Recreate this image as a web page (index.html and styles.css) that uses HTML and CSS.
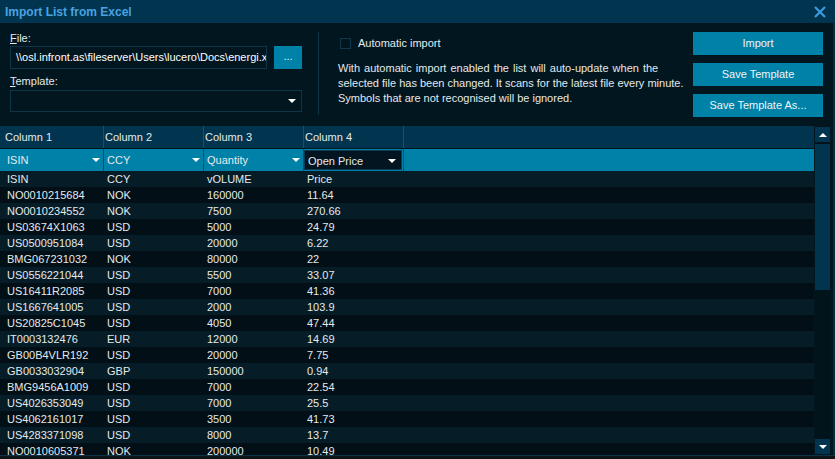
FILE: index.html
```html
<!DOCTYPE html>
<html>
<head>
<meta charset="utf-8">
<title>Import List from Excel</title>
<link rel="stylesheet" href="styles.css">
</head>
<body>
<div class="dialog">
  <div class="titlebar">
    <span class="title">Import List from Excel</span>
    <svg class="close" width="12" height="12" viewBox="0 0 12 12"><path d="M1 1L11 11M11 1L1 11" stroke="#3d9ade" stroke-width="2.2"/></svg>
  </div>
  <div class="content">
    <div class="top">
      <div class="file-panel">
        <div class="label"><u>F</u>ile:</div>
        <div class="file-row">
          <div class="input">\\osl.infront.as\fileserver\Users\lucero\Docs\energi.xlsx</div>
          <div class="browse">...</div>
        </div>
        <div class="label label-template"><u>T</u>emplate:</div>
        <div class="select"><span class="arrow"></span></div>
      </div>
      <div class="sep"></div>
      <div class="info">
        <div class="check-row"><span class="checkbox"></span><span>Automatic import</span></div>
        <p class="desc"><span class="l1">With automatic import enabled the list will auto-update when the</span><br>selected file has been changed. It scans for the latest file every minute.<br>Symbols that are not recognised will be ignored.</p>
      </div>
      <div class="buttons">
        <div class="btn">Import</div>
        <div class="btn">Save Template</div>
        <div class="btn">Save Template As...</div>
      </div>
    </div>
    <div class="grid">
      <div class="table">
        <div class="row head">
          <div class="cell">Column 1</div>
          <div class="cell">Column 2</div>
          <div class="cell">Column 3</div>
          <div class="cell">Column 4</div>
          <div class="cell last"></div>
        </div>
        <div class="row selrow">
          <div class="cell"><span>ISIN</span><span class="arrow"></span></div>
          <div class="cell"><span>CCY</span><span class="arrow"></span></div>
          <div class="cell"><span>Quantity</span><span class="arrow"></span></div>
          <div class="cell focus"><div class="combo"><span>Open Price</span><span class="arrow"></span></div></div>
          <div class="cell last"></div>
        </div>
        <div class="rows">
          <div class="row data"><div>ISIN</div><div>CCY</div><div>vOLUME</div><div>Price</div></div>
          <div class="row data"><div>NO0010215684</div><div>NOK</div><div>160000</div><div>11.64</div></div>
          <div class="row data"><div>NO0010234552</div><div>NOK</div><div>7500</div><div>270.66</div></div>
          <div class="row data"><div>US03674X1063</div><div>USD</div><div>5000</div><div>24.79</div></div>
          <div class="row data"><div>US0500951084</div><div>USD</div><div>20000</div><div>6.22</div></div>
          <div class="row data"><div>BMG067231032</div><div>NOK</div><div>80000</div><div>22</div></div>
          <div class="row data"><div>US0556221044</div><div>USD</div><div>5500</div><div>33.07</div></div>
          <div class="row data"><div>US16411R2085</div><div>USD</div><div>7000</div><div>41.36</div></div>
          <div class="row data"><div>US1667641005</div><div>USD</div><div>2000</div><div>103.9</div></div>
          <div class="row data"><div>US20825C1045</div><div>USD</div><div>4050</div><div>47.44</div></div>
          <div class="row data"><div>IT0003132476</div><div>EUR</div><div>12000</div><div>14.69</div></div>
          <div class="row data"><div>GB00B4VLR192</div><div>USD</div><div>20000</div><div>7.75</div></div>
          <div class="row data"><div>GB0033032904</div><div>GBP</div><div>150000</div><div>0.94</div></div>
          <div class="row data"><div>BMG9456A1009</div><div>USD</div><div>7000</div><div>22.54</div></div>
          <div class="row data"><div>US4026353049</div><div>USD</div><div>7000</div><div>25.5</div></div>
          <div class="row data"><div>US4062161017</div><div>USD</div><div>3500</div><div>41.73</div></div>
          <div class="row data"><div>US4283371098</div><div>USD</div><div>8000</div><div>13.7</div></div>
          <div class="row data"><div>NO0010605371</div><div>NOK</div><div>200000</div><div>10.49</div></div>
        </div>
      </div>
      <div class="scrollbar">
        <div class="sb-btn"><span class="up"></span></div>
        <div class="thumb"></div>
        <div class="track"></div>
        <div class="sb-btn"><span class="down"></span></div>
      </div>
      <div class="edge"></div>
    </div>
  </div>
  <div class="under"></div>
</div>
</body>
</html>
```
FILE: styles.css
```css
* { box-sizing: border-box; margin: 0; padding: 0; }
html, body { width: 835px; height: 459px; overflow: hidden; background: #02161f; }
body { font-family: "Liberation Sans", Arial, sans-serif; font-size: 11px; color: #e4eaed; }

.dialog { width: 835px; height: 459px; display: flex; flex-direction: column; background: #02161f; }

.titlebar { height: 23px; flex: none; background: #00344f; display: flex; align-items: center; justify-content: space-between; padding: 0 9px 0 5px; }
.title { font-size: 12px; font-weight: bold; color: #4aa3e0; }
.close { display: block; }

.content { flex: none; height: 432px; display: flex; flex-direction: column; border-right: 2px solid #0a2c3e; }

.top { height: 103px; flex: none; display: flex; padding: 9px 10px 0 10px; }
.file-panel { width: 292px; flex: none; display: flex; flex-direction: column; }
.label { height: 13px; line-height: 13px; color: #e4eaed; }
.label u { text-decoration: underline; }
.file-row { display: flex; height: 23px; margin-top: 1px; }
.input { width: 257px; height: 23px; border: 1px solid #0d3447; padding-left: 5px; line-height: 21px; white-space: nowrap; overflow: hidden; color: #ffffff; }
.browse { width: 28px; height: 23px; margin-left: 7px; background: #0082a8; text-align: center; line-height: 21px; color: #e8f2f6; }
.label-template { margin-top: 6px; }
.select { margin-top: 2px; height: 22px; border: 1px solid #0d3447; display: flex; align-items: center; justify-content: flex-end; padding-right: 5px; }

.arrow { display: block; width: 0; height: 0; border-left: 4px solid transparent; border-right: 4px solid transparent; border-top: 4px solid #ffffff; }

.sep { width: 1px; height: 83px; background: #0b3146; margin-left: 16px; flex: none; }

.info { flex: 1; margin-left: 19px; }
.check-row { height: 14px; margin-top: 4px; display: flex; align-items: center; padding-left: 2px; }
.checkbox { width: 11px; height: 11px; border: 1px solid #0f3649; margin-right: 7px; }
.desc { margin-top: 11px; line-height: 15px; color: #e4eaed; white-space: nowrap; }
.l1 { word-spacing: 1px; }

.buttons { width: 130px; flex: none; display: flex; flex-direction: column; gap: 8px; }
.btn { height: 23px; background: #0082a8; color: #eef5f8; text-align: center; line-height: 23px; }

.grid { height: 329px; flex: none; display: flex; }
.table { width: 814px; flex: none; display: flex; flex-direction: column; overflow: hidden; }

.row { display: grid; grid-template-columns: 100px 100px 100px 100px 1fr; padding-left: 4px; }
.head { height: 22px; flex: none; background: #00344f; }
.head .cell { border-right: 1px solid #1f4c7c; padding-left: 1px; line-height: 22px; }
.head .cell.last { border-right: none; }

.selrow { height: 22px; flex: none; margin-top: 1px; background: #0082a8; }
.selrow .cell { border-right: 1px solid #0a4f6e; display: flex; align-items: center; justify-content: space-between; padding: 0 3px 0 3px; }
.selrow .cell.last { border-right: none; }
.selrow .cell.focus { padding: 1px 1px 1px 0; border-right: 1px solid #0a4f6e; }
.combo { flex: 1; height: 20px; background: #021520; border: 1px solid #0c3b56; display: flex; align-items: center; justify-content: space-between; padding: 1px 5px 0 3px; }

.rows { flex: 1; overflow: hidden; }
.data { height: 16px; line-height: 16px; }
.data div { padding-left: 3px; white-space: nowrap; }
.data:nth-child(odd) { background: #061c26; }
.data:nth-child(even) { background: #020f16; }

.scrollbar { width: 15px; margin-left: 1px; flex: none; display: flex; flex-direction: column; background: #01141c; }
.sb-btn { height: 15px; flex: none; background: #00344f; display: flex; align-items: center; justify-content: center; }
.sb-btn:first-child { margin-top: 1px; }
.sb-btn:last-child { margin-bottom: 1px; }
.thumb { height: 146px; margin-top: 2px; background: #00344f; flex: none; }
.track { flex: 1; }
.up { width: 0; height: 0; border-left: 4px solid transparent; border-right: 4px solid transparent; border-bottom: 4px solid #ffffff; }
.down { width: 0; height: 0; border-left: 4px solid transparent; border-right: 4px solid transparent; border-top: 4px solid #ffffff; }

.edge { width: 3px; flex: none; }

.under { height: 4px; flex: none; border-top: 1px solid #0b3447; background: #0d1418; }
```
